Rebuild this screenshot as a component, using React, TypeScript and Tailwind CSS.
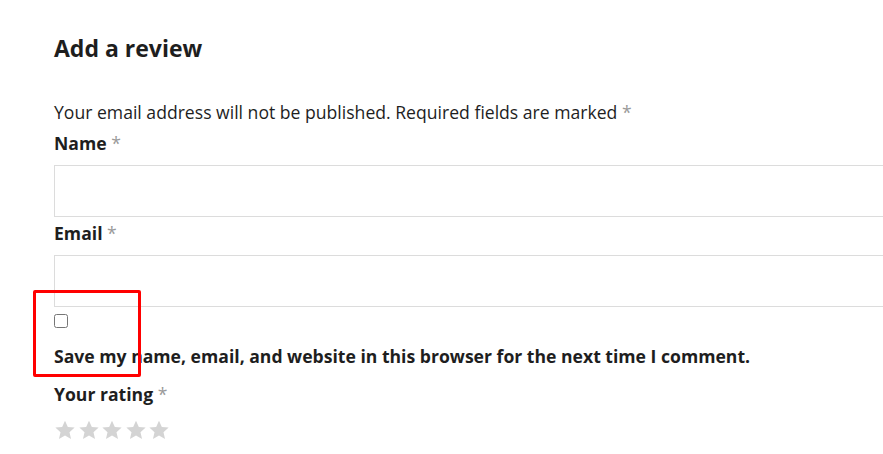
const Req = () => <span className="font-normal text-[#9a9a9a]">*</span>;

const Star = () => (
  <svg viewBox="0 0 24 24" className="h-[22px] w-[22px] fill-[#d4d4d4]">
    <path d="M12 1.8l3.1 6.9 7.4.7-5.6 5 1.7 7.4L12 17.9l-6.6 3.9 1.7-7.4-5.6-5 7.4-.7z" />
  </svg>
);

export default function App() {
  return (
    <div className="relative h-[454px] w-[883px] overflow-hidden bg-white font-['Open_Sans',sans-serif] text-[#1e1e1e]">
      <div className="pl-[54px] pt-[34px]">
        <h3 className="text-[23px] font-bold leading-[28px]">Add a review</h3>
        <p className="mt-[37px] text-[17.6px] leading-[26px]">
          Your email address will not be published. Required fields are marked <Req />
        </p>
        <label className="mt-[5px] block text-[17.6px] font-bold leading-[26px]">
          Name <Req />
        </label>
        <input className="mt-[9px] block h-[52px] w-[860px] border border-[#dcdcdc] outline-none" />
        <label className="mt-[3px] block text-[17.6px] font-bold leading-[26px]">
          Email <Req />
        </label>
        <input className="mt-[9px] block h-[52px] w-[860px] border border-[#dcdcdc] outline-none" />
        <input type="checkbox" className="mt-[7px] block h-[14px] w-[14px]" />
        <label className="mt-[15px] block text-[17.6px] font-bold leading-[26px]">
          Save my name, email, and website in this browser for the next time I comment.
        </label>
        <label className="mt-[12px] block text-[17.6px] font-bold leading-[26px]">
          Your rating <Req />
        </label>
        <div className="mt-[12px] flex gap-[1.5px]">
          <Star />
          <Star />
          <Star />
          <Star />
          <Star />
        </div>
      </div>
      <div className="absolute left-[33px] top-[290px] h-[87px] w-[108px] rounded-[2px] border-[3px] border-[#ff0000]" />
    </div>
  );
}
